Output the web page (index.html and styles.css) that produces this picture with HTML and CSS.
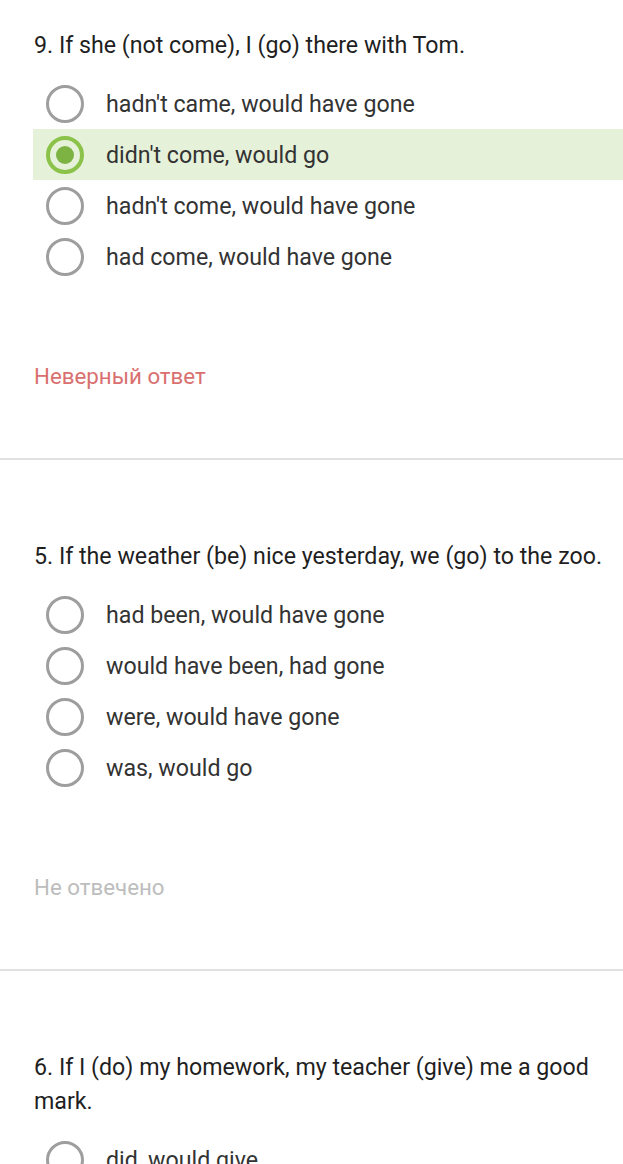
FILE: index.html
```html
<!DOCTYPE html>
<html lang="ru">
  <head>
    <meta charset="UTF-8" />
    <meta name="viewport" content="width=device-width, initial-scale=1.0" />
    <title>Тест</title>
    <link rel="stylesheet" href="styles.css">
  </head>
  <body>
    <div class="question first">
      <div class="title">9. If she (not come), I (go) there with Tom.</div>
      <div class="options">
        <div class="option"><span class="radio"></span><span class="label">hadn't came, would have gone</span></div>
        <div class="option chosen"><span class="radio"></span><span class="label">didn't come, would go</span></div>
        <div class="option"><span class="radio"></span><span class="label">hadn't come, would have gone</span></div>
        <div class="option"><span class="radio"></span><span class="label">had come, would have gone</span></div>
      </div>
      <div class="status wrong">Неверный ответ</div>
    </div>
    <div class="question">
      <div class="title">5. If the weather (be) nice yesterday, we (go) to the zoo.</div>
      <div class="options">
        <div class="option"><span class="radio"></span><span class="label">had been, would have gone</span></div>
        <div class="option"><span class="radio"></span><span class="label">would have been, had gone</span></div>
        <div class="option"><span class="radio"></span><span class="label">were, would have gone</span></div>
        <div class="option"><span class="radio"></span><span class="label">was, would go</span></div>
      </div>
      <div class="status empty">Не отвечено</div>
    </div>
    <div class="question">
      <div class="title">6. If I (do) my homework, my teacher (give) me a good mark.</div>
      <div class="options">
        <div class="option"><span class="radio"></span><span class="label">did, would give</span></div>
      </div>
    </div>
  </body>
</html>
```

FILE: styles.css
```css
body {
  margin: 0;
  background-color: #fff;
  font-family: Roboto, "Noto Sans", sans-serif;
  overflow: hidden;
}
.question {
  border-top: 2px solid #e0e0e0;
  padding: 79px 0 68px 33px;
}
.question.first {
  border-top: none;
  padding-top: 28px;
}
.title {
  font-size: 23.2px;
  line-height: 34px;
  color: #1f1f1f;
  padding-left: 1px;
  padding-right: 12px;
}
.options {
  margin-top: 16px;
}
.option {
  display: flex;
  align-items: center;
  height: 51px;
  padding-left: 13px;
}
.option.chosen {
  background-color: #e6f1da;
}
.radio {
  width: 38px;
  height: 38px;
  box-sizing: border-box;
  border: 3px solid #9e9e9e;
  border-radius: 50%;
  flex-shrink: 0;
  display: flex;
  align-items: center;
  justify-content: center;
}
.chosen .radio {
  border: 4px solid #8bc34a;
}
.chosen .radio::after {
  content: "";
  width: 18px;
  height: 18px;
  border-radius: 50%;
  background-color: #7cb342;
}
.label {
  margin-left: 22px;
  font-size: 23.2px;
  color: #333;
}
.status {
  margin-top: 80px;
  font-size: 22.3px;
  line-height: 28px;
  padding-left: 1px;
}
.status.wrong {
  color: #d9706f;
}
.status.empty {
  color: #bdbdbd;
}
```
